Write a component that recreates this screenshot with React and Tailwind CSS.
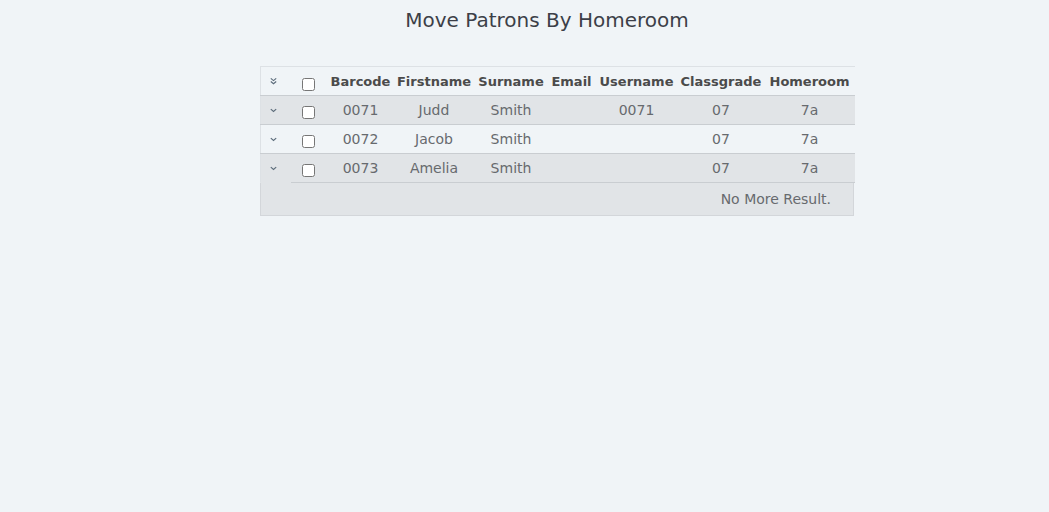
import React from 'react'

const rows = [
  { barcode: '0071', firstname: 'Judd', surname: 'Smith', email: '', username: '0071', classgrade: '07', homeroom: '7a' },
  { barcode: '0072', firstname: 'Jacob', surname: 'Smith', email: '', username: '', classgrade: '07', homeroom: '7a' },
  { barcode: '0073', firstname: 'Amelia', surname: 'Smith', email: '', username: '', classgrade: '07', homeroom: '7a' },
]

const columns = [
  { key: 'barcode', label: 'Barcode', w: 'w-[66px]' },
  { key: 'firstname', label: 'Firstname', w: 'w-[81px]' },
  { key: 'surname', label: 'Surname', w: 'w-[73px]' },
  { key: 'email', label: 'Email', w: 'w-[48px]' },
  { key: 'username', label: 'Username', w: 'w-[82px]' },
  { key: 'classgrade', label: 'Classgrade', w: 'w-[87px]' },
  { key: 'homeroom', label: 'Homeroom', w: 'w-[90px]' },
]

const Chevron = ({ double }) => (
  <svg width="9" height="9" viewBox="0 0 10 10" fill="none" stroke="#5b6b7a" strokeWidth="1.3" className="ml-[8px]">
    {double ? (
      <>
        <path d="M2 1.5 L5 4 L8 1.5" />
        <path d="M2 5 L5 7.5 L8 5" />
      </>
    ) : (
      <path d="M2 3.5 L5 6 L8 3.5" />
    )}
  </svg>
)

const Box = ({ top }) => (
  <input type="checkbox" className={`w-[13px] h-[13px] m-0 align-middle ${top}`} />
)

const App = () => {
  return (
    <div className="min-h-[512px] bg-[#f0f4f7] text-[#4a4a4a]" style={{ fontFamily: '"DejaVu Sans", sans-serif' }}>
      <h1 className="text-center text-[20px] pt-[5px] pl-[45px] text-[#3c3f48] font-normal">Move Patrons By Homeroom</h1>

      <div className="w-[594px] mt-[31px] ml-[260px]">
        <table className="w-[594px] table-fixed border-collapse">
          <thead>
            <tr className="h-[29px] border-t border-[#dde1e5]">
              <th className="w-[30px] border-l border-[#dde1e5] border-b border-b-[#c9cdd1]"><Chevron double /></th>
              <th className="w-[37px] border-b border-[#c9cdd1] pr-[2px]"><Box top="mt-[6px]" /></th>
              {columns.map((c) => (
                <th key={c.key} className={`${c.w} text-[13px] font-bold text-[#4b4b4b] whitespace-nowrap px-0 pt-[2px] border-b border-[#c9cdd1]`}>{c.label}</th>
              ))}
            </tr>
          </thead>
          <tbody>
            {rows.map((r, i) => {
              const last = i === rows.length - 1
              return (
                <tr key={r.barcode} className={`h-[29px] ${i % 2 === 0 ? 'bg-[#e1e4e7]' : 'bg-[#f0f4f7]'}`}>
                  <td className={`border-l border-[#dde1e5] border-b ${last ? 'border-b-[#e1e4e7]' : 'border-b-[#c9cdd1]'}`}><Chevron /></td>
                  <td className="text-center border-b border-[#c9cdd1] pr-[2px]"><Box top="mt-[4px]" /></td>
                  {columns.map((c) => (
                    <td key={c.key} className="text-center text-[14px] text-[#676a6e] font-normal pt-[1px] border-b border-[#c9cdd1]">{r[c.key]}</td>
                  ))}
                </tr>
              )
            })}
          </tbody>
        </table>
        <div className="h-[33px] bg-[#e1e4e7] border border-t-0 border-[#d3d6da] flex items-center justify-end pr-[22px] text-[14px] text-[#676a6e]">
          No More Result.
        </div>
      </div>
    </div>
  )
}

export default App
